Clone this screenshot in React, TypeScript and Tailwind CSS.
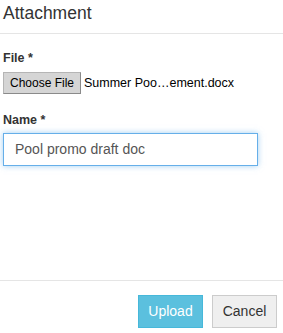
import React from "react";

export default function App() {
  return (
    <div
      className="w-[283px] h-[333px] bg-white flex flex-col overflow-hidden text-[#333]"
      style={{ fontFamily: '"Liberation Sans", Arial, sans-serif' }}
    >
      <div className="h-[34px] border-b border-[#e5e5e5] pl-[3px] flex items-start shrink-0">
        <h4 className="text-[17.5px] leading-[20px] mt-[3px] font-normal">Attachment</h4>
      </div>
      <div className="flex-1 pl-[3px] pr-[25px]">
        <div className="mt-[16px] text-[12.5px] leading-[16px] font-bold">File *</div>
        <div className="mt-[6px] flex items-center">
          <div className="h-[22px] w-[78px] bg-[#d5d5d5] border border-[#b5b5b5] border-r-[#8a8a8a] border-b-[#8a8a8a] flex items-center justify-center text-[12px] text-black">
            Choose File
          </div>
          <span className="ml-[3px] text-[12.5px] text-black">Summer Poo…ement.docx</span>
        </div>
        <div className="mt-[18px] text-[12.5px] leading-[16px] font-bold">Name *</div>
        <div className="mt-[5px] h-[33px] w-[255px] border border-[#66afe9] shadow-[0_0_6px_rgba(102,175,233,0.6)] flex items-center px-[11px] text-[14px] text-[#555]">
          Pool promo draft doc
        </div>
      </div>
      <div className="h-[53px] border-t border-[#e5e5e5] shrink-0 flex justify-end items-start pt-[14px] pr-[6px] gap-[9px]">
        <button className="h-[33px] w-[65px] bg-[#5bc0de] border border-[#46b8da] text-white text-[14px]">
          Upload
        </button>
        <button className="h-[33px] w-[65px] bg-[#efefef] border border-[#ccc] text-[#333] text-[14px]">
          Cancel
        </button>
      </div>
    </div>
  );
}
